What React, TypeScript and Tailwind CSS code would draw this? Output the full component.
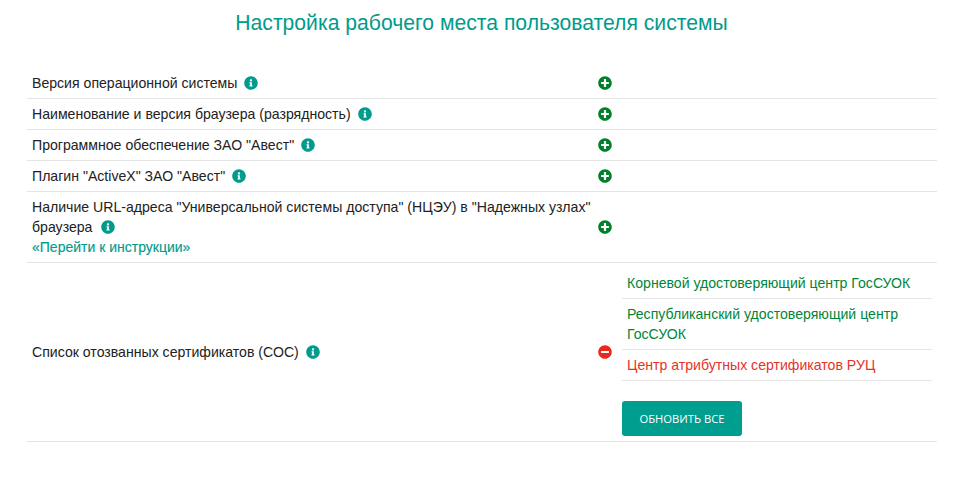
import { FaInfoCircle, FaMinusCircle, FaPlusCircle } from 'react-icons/fa'

function Info({ wide }: { wide?: boolean }) {
  return (
    <FaInfoCircle
      className={
        wide
          ? 'ml-[9px] inline-block h-[14px] w-[14px] align-[-2px] text-[#009b8d]'
          : 'ml-[7px] inline-block h-[14px] w-[14px] align-[-2px] text-[#009b8d]'
      }
    />
  )
}

function Row({ children, icon }: { children: React.ReactNode; icon?: 'plus' | 'minus' }) {
  return (
    <div className="flex items-center border-b border-[#e6e6e6]">
      <div className="w-[566px] shrink-0 py-[5px] pl-[5px]">{children}</div>
      <div className="flex w-[24px] shrink-0 justify-center">
        {icon === 'minus' ? (
          <FaMinusCircle className="h-[14px] w-[14px] text-[#e8291c]" />
        ) : (
          <FaPlusCircle className="h-[14px] w-[14px] text-[#00802b]" />
        )}
      </div>
    </div>
  )
}

const simpleRows = [
  'Версия операционной системы',
  'Наименование и версия браузера (разрядность)',
  'Программное обеспечение ЗАО "Авест"',
  'Плагин "ActiveX" ЗАО "Авест"',
]

export default function App() {
  return (
    <div className="min-h-[497px] bg-white px-[26px] font-['Liberation_Sans',Arial,sans-serif] text-[14.1px] leading-[20px] text-[#222]">
      <h1 className="h-[68px] pt-[11px] text-center text-[21.17px] leading-[24px] font-normal text-[#009b8d]">
        Настройка рабочего места пользователя системы
      </h1>
      <div className="ml-px w-[910px]">
        {simpleRows.map((label) => (
          <Row key={label} icon="plus">
            {label}
            <Info />
          </Row>
        ))}
        <Row icon="plus">
          Наличие URL-адреса "Универсальной системы доступа" (НЦЭУ) в "Надежных узлах" браузера
          <Info wide />
          <br />
          <a href="#" className="text-[14px] text-[#009b8d] [-webkit-text-stroke:0.15px_#009b8d]">
            «Перейти к инструкции»
          </a>
        </Row>
        <div className="flex items-center border-b border-[#e6e6e6]">
          <div className="w-[566px] shrink-0 px-[5px]">
            Список отозванных сертификатов (СОС)
            <Info />
          </div>
          <div className="flex w-[24px] shrink-0 justify-center">
            <FaMinusCircle className="h-[14px] w-[14px] text-[#e8291c]" />
          </div>
          <div className="flex-1 px-[5px] pt-[5px] pb-[5px]">
            <ul>
              <li className="border-b border-[#e6e6e6] px-[5px] py-[5px] text-[#008539]">
                Корневой удостоверяющий центр ГосСУОК
              </li>
              <li className="border-b border-[#e6e6e6] px-[5px] py-[5px] text-[#008539]">
                Республиканский удостоверяющий центр ГосСУОК
              </li>
              <li className="border-b border-[#e6e6e6] px-[5px] py-[5px] text-[#e5332a]">
                Центр атрибутных сертификатов РУЦ
              </li>
            </ul>
            <button
              type="button"
              className="mt-[20px] flex h-[35px] w-[120px] items-center justify-center rounded-[3px] bg-[#009e8e] font-['Open_Sans',sans-serif] text-[11.2px] text-white"
            >
              ОБНОВИТЬ ВСЕ
            </button>
          </div>
        </div>
      </div>
    </div>
  )
}
